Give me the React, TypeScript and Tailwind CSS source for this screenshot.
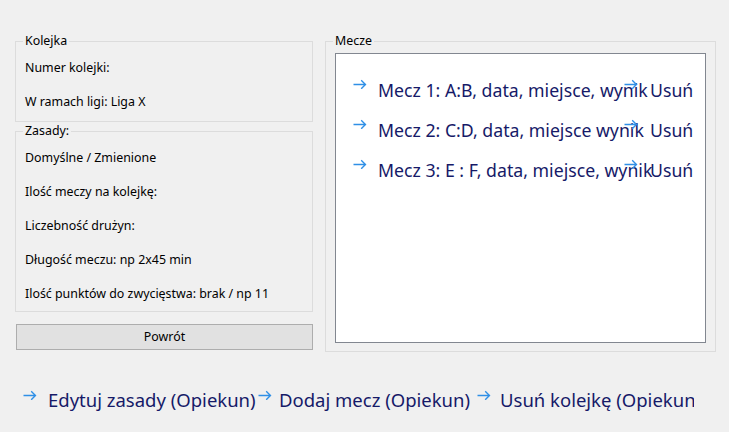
import React from "react";

const Arrow = ({ className = "" }: { className?: string }) => (
  <svg width="14" height="10" viewBox="0 0 14 10" className={className} fill="none">
    <path d="M0.5 5.5 H12.5 M8.2 1.2 L12.5 5.5 L8.2 9.8" stroke="#2f8fe6" strokeWidth="1.35" />
  </svg>
);

const Label = ({ children }: { children: React.ReactNode }) => (
  <div className="h-[34px] flex items-center text-[12.4px] text-black">{children}</div>
);

const MatchRow = ({ text }: { text: string }) => (
  <div className="flex h-[40px] items-start">
    <div className="w-[271px] flex shrink-0 items-start pt-[9px]">
      <Arrow className="mt-[1px] shrink-0" />
      <span className="ml-[11px] whitespace-nowrap text-[17.7px] leading-[24px] text-[#161a68]">{text}</span>
    </div>
    <div className="flex shrink-0 items-start pt-[9px] relative z-10">
      <Arrow className="mt-[1px] shrink-0" />
      <span className="ml-[12px] whitespace-nowrap text-[17.7px] leading-[24px] text-[#161a68]">Usuń</span>
    </div>
  </div>
);

const BottomLink = ({ text, w, gap }: { text: string; w: string; gap: string }) => (
  <div className={`flex items-start shrink-0 ${w}`}>
    <Arrow className="mt-[1px] shrink-0" />
    <span className={`${gap} whitespace-nowrap text-[18.5px] leading-[22px] text-[#161a68]`}>{text}</span>
  </div>
);

export default function App() {
  return (
    <div
      className="w-[729px] h-[432px] bg-[#f0f0f0] overflow-hidden"
      style={{ fontFamily: '"Noto Sans", "Open Sans", sans-serif' }}
    >
      <div className="flex pt-[33px] pl-[15px] gap-[12px]">
        <div className="w-[298px] flex flex-col">
          <fieldset className="border border-[#dcdcdc] h-[89px] px-[9px]">
            <legend className="ml-[-2px] px-[2px] text-[12.4px] leading-[16px] text-black">Kolejka</legend>
            <div className="pt-[2px]">
              <Label>Numer kolejki:</Label>
              <Label>W ramach ligi: Liga X</Label>
            </div>
          </fieldset>
          <fieldset className="mt-[1px] border border-[#dcdcdc] h-[189px] px-[9px]">
            <legend className="ml-[-2px] px-[2px] text-[12.4px] leading-[16px] text-black">Zasady:</legend>
            <div className="mt-[2px]">
              <Label>Domyślne / Zmienione</Label>
              <Label>Ilość meczy na kolejkę:</Label>
              <Label>Liczebność drużyn:</Label>
              <Label>Długość meczu: np 2x45 min</Label>
              <Label>Ilość punktów do zwycięstwa: brak / np 11</Label>
            </div>
          </fieldset>
          <button className="mt-[12px] ml-[1px] h-[26px] border border-[#adadad] bg-[#e1e1e1] text-[12.4px] text-black">
            Powrót
          </button>
        </div>
        <fieldset className="w-[391px] h-[319px] border border-[#dcdcdc] px-[9px] pb-[8px] flex flex-col">
          <legend className="ml-[-2px] px-[2px] text-[12.4px] leading-[16px] text-black">Mecze</legend>
          <div className="mt-[4px] h-[290px] border border-[#828790] bg-white overflow-hidden pl-[17px] pt-[15px]">
            <MatchRow text="Mecz 1: A:B, data, miejsce, wynik" />
            <MatchRow text="Mecz 2: C:D, data, miejsce wynik" />
            <MatchRow text="Mecz 3: E : F, data, miejsce, wynik" />
          </div>
        </fieldset>
      </div>
      <div className="flex pl-[23px] pt-[37px] w-[694px] overflow-hidden">
        <BottomLink text="Edytuj zasady (Opiekun)" w="w-[235px]" gap="ml-[11px]" />
        <BottomLink text="Dodaj mecz (Opiekun)" w="w-[219px]" gap="ml-[7px]" />
        <BottomLink text="Usuń kolejkę (Opiekun)" w="w-[215px]" gap="ml-[9px]" />
      </div>
    </div>
  );
}
